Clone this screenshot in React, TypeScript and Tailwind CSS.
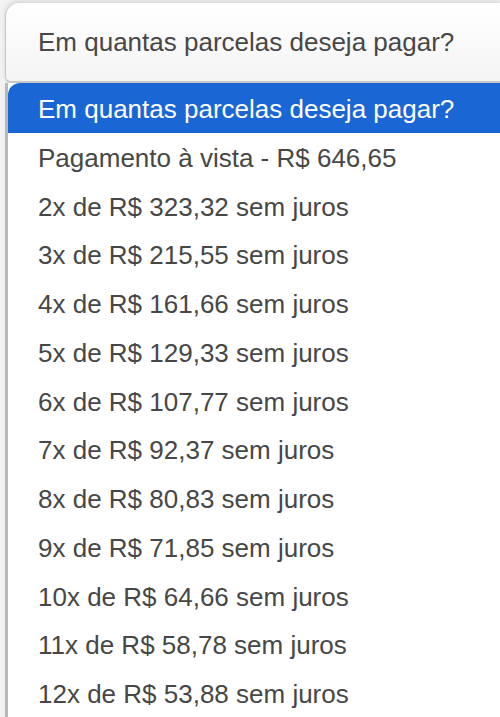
const options = [
  "Em quantas parcelas deseja pagar?",
  "Pagamento à vista - R$ 646,65",
  "2x de R$ 323,32 sem juros",
  "3x de R$ 215,55 sem juros",
  "4x de R$ 161,66 sem juros",
  "5x de R$ 129,33 sem juros",
  "6x de R$ 107,77 sem juros",
  "7x de R$ 92,37 sem juros",
  "8x de R$ 80,83 sem juros",
  "9x de R$ 71,85 sem juros",
  "10x de R$ 64,66 sem juros",
  "11x de R$ 58,78 sem juros",
  "12x de R$ 53,88 sem juros",
];

export default function App() {
  return (
    <div className="h-[717px] w-[500px] overflow-hidden bg-[#f2f2f2] font-['Liberation_Sans',Arial,sans-serif] text-[26px] text-[#474747]">
      {/* closed select */}
      <div className="ml-[5px] mt-[3px] flex h-[80px] items-center rounded-tl-[14px] rounded-bl-[6px] border-b-2 border-l border-[#c8c8c8] bg-gradient-to-b from-white to-[#f4f4f4] pl-[32px] shadow-[0_-2px_4px_rgba(0,0,0,0.12)]">
        Em quantas parcelas deseja pagar?
      </div>

      {/* open list */}
      <div className="ml-[5px] border-l-[3px] border-[#b9b9b9] bg-white">
        {options.map((opt, i) => (
          <div
            key={opt}
            className={
              i === 0
                ? "flex h-[50px] items-center rounded-tl-[12px] bg-[#1b66d5] pl-[30px] pt-[2px] text-white"
                : "flex h-[48.75px] items-center pl-[30px] pt-[2px]"
            }
          >
            {opt}
          </div>
        ))}
      </div>
    </div>
  );
}
